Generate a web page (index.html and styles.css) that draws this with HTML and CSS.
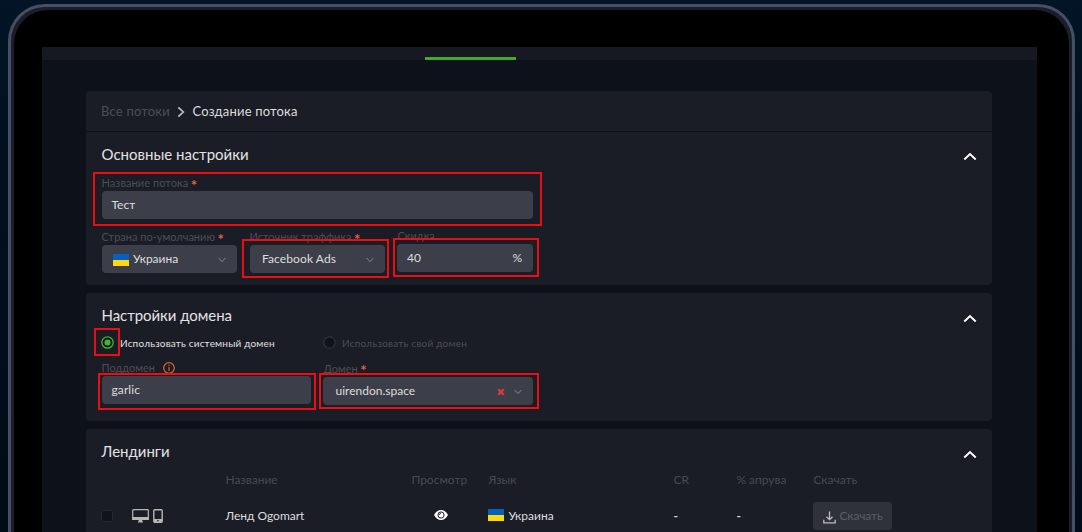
FILE: index.html
```html
<!DOCTYPE html>
<html lang="ru">
<head>
<meta charset="utf-8">
<title>Создание потока</title>
<link rel="stylesheet" href="styles.css">
</head>
<body>
<svg width="0" height="0" class="defs">
  <symbol id="up" viewBox="0 0 14 9"><path d="M1.300 7.500 7 2l5.700 5.500" fill="none" stroke="#fff" stroke-width="1.900"/></symbol>
  <symbol id="down" viewBox="0 0 8 6"><path d="M.6 1 4 4.600 7.400 1" fill="none" stroke="#858993" stroke-width="1"/></symbol>
  <symbol id="flag" viewBox="0 0 16 12"><path d="M0 0h16v6H0z" fill="#0561c0"/><path d="M0 6h16v6H0z" fill="#ffd90f"/></symbol>
</svg>
<div class="laptop">
  <div class="screen">
    <div class="topbar"><div class="tab"></div></div>
    <main class="content">
      <nav class="crumbs">
        <span class="crumb-link">Все потоки</span>
        <svg class="crumb-arrow" viewBox="0 0 8 12"><path d="M1.300 1.300 6.300 6l-5 4.700" fill="none" stroke="#bdbdbd" stroke-width="1.700"/></svg>
        <span class="crumb-here">Создание потока</span>
      </nav>
      <section class="card main-card">
        <header class="head"><h2>Основные настройки</h2><svg class="up"><use href="#up"/></svg></header>
        <div class="field wide"><label><span class="l-name">Название потока</span><b>*</b></label><div class="input"><span>Тест</span></div></div>
        <div class="row">
          <div class="field sel"><label><span>Страна по-умолчанию</span><b>*</b></label><div class="input select"><svg class="flag"><use href="#flag"/></svg><span>Украина</span><svg class="down"><use href="#down"/></svg></div></div>
          <div class="field sel"><label><span>Источник траффика</span><b>*</b></label><div class="input select"><span class="v-fb">Facebook Ads</span><svg class="down"><use href="#down"/></svg></div></div>
          <div class="field sale"><label><span>Скидка</span></label><div class="input between"><span>40</span><span>%</span></div></div>
        </div>
      </section>
      <section class="card domain-card">
        <header class="head"><h2 class="t-domain">Настройки домена</h2><svg class="up"><use href="#up"/></svg></header>
        <div class="radios">
          <div class="radio on"><svg viewBox="0 0 14 14"><circle cx="7" cy="7" r="6.100" fill="#10131c" stroke="#41b82c" stroke-width="1.400"/><circle cx="7" cy="7" r="3.300" fill="#41b82c"/></svg><span>Использовать системный домен</span></div>
          <div class="radio"><svg viewBox="0 0 14 14"><circle cx="7" cy="7" r="6.100" fill="#10131c" stroke="#363943" stroke-width="1.100"/></svg><span>Использовать свой домен</span></div>
        </div>
        <div class="row">
          <div class="field sub"><label><span>Поддомен</span><svg class="info" viewBox="0 0 12 12"><circle cx="6" cy="6" r="5.300" fill="none" stroke="#d9652f" stroke-width="1.200"/><path d="M6 5v4M6 2.800v1.200" stroke="#d9652f" stroke-width="1.200"/></svg></label><div class="input"><span class="v-garlic">garlic</span></div></div>
          <div class="field dom"><label><span>Домен</span><b>*</b></label><div class="input select"><span>uirendon.space</span><svg class="clear" viewBox="0 0 8 8"><path d="m1.200 1.200 5.600 5.600m0-5.600L1.200 6.800" stroke="#e0393c" stroke-width="2.200"/></svg><svg class="down"><use href="#down"/></svg></div></div>
        </div>
      </section>
      <section class="card land-card">
        <header class="head"><h2>Лендинги</h2><svg class="up"><use href="#up"/></svg></header>
        <div class="grid thead"><span></span><span></span><span>Название</span><span>Просмотр</span><span>Язык</span><span>CR</span><span>% апрува</span><span>Скачать</span></div>
        <div class="grid line">
          <span class="check"></span>
          <span class="devices">
            <svg width="17" height="14" viewBox="0 0 17 14"><path d="M1.500.7h14q.8 0 .8.8v8.800H.7V1.500q0-.8.8-.8z" fill="none" stroke="#b7b7b7" stroke-width="1.200"/><path d="M.5 8h16v3H.5zM6.800 11h3.400l.8 2.400H6z" fill="#b7b7b7"/></svg>
            <svg width="10" height="14" viewBox="0 0 10 14"><rect x=".8" y=".8" width="8.400" height="12.400" rx="1" fill="none" stroke="#b7b7b7" stroke-width="1.400"/><path d="M1 10h8v3H1z" fill="#b7b7b7"/><circle cx="5" cy="11.700" r=".8" fill="#1a1c26"/></svg>
          </span>
          <span>Ленд Ogomart</span>
          <span class="eye"><svg width="14" height="10" viewBox="0 0 14 10"><path d="M0 5Q2.800 0 7 0t7 5q-2.800 5-7 5T0 5z" fill="#fff"/><circle cx="7" cy="5" r="3.100" fill="none" stroke="#1a1c26" stroke-width="1"/><path d="M5.300 5Q5.500 3.300 7 3.200" fill="none" stroke="#1a1c26" stroke-width=".9"/></svg></span>
          <span class="lang"><svg class="flag"><use href="#flag"/></svg><span>Украина</span></span>
          <span class="dash">-</span><span class="dash">-</span>
          <span class="button"><svg width="13" height="13" viewBox="0 0 13 13"><path d="M6.500.5v8M3.500 5.700l3 3 3-3M.8 8.800v3.100h11.400V8.800" fill="none" stroke="#bcbcbe" stroke-width="1.300"/></svg><span class="c-load">Скачать</span></span>
        </div>
      </section>
    </main>
  </div>
</div>
<div class="mark m-name"></div><div class="mark m-source"></div><div class="mark m-sale"></div>
<div class="mark m-radio"></div><div class="mark m-sub"></div><div class="mark m-dom"></div>
</body>
</html>
```
FILE: styles.css
```css
* { box-sizing: border-box; }
html { overflow: hidden; }
body { margin: 0; width: 1082px; height: 532px; overflow: hidden; position: relative; padding: 4px 7px 0 8px; background: linear-gradient(#021426, #010f1e 35%, #020c18); font: 12px/16px Lato, "Open Sans", sans-serif; color: #dededf; white-space: nowrap; }
svg { display: block; flex: none; }
.defs { position: absolute; }
.laptop { height: 528px; overflow: hidden; border: 3px solid #465064; border-bottom: 0; border-radius: 37px 37px 0 0; background: #000; box-shadow: inset 3px 3px 0 #1a1e2a, inset -3px 3px 0 #1a1e2a; padding: 40px 35px 0 31px; }
.screen { height: 485px; overflow: hidden; background: #0d1119; }
.topbar { height: 13px; background: #161922; padding: 10px 0 0 383px; }
.tab { width: 91px; height: 3px; background: #43a92f; }
.content { padding: 31px 45px 0 44px; }
.crumbs { height: 40px; display: flex; align-items: center; padding-left: 15px; background: #1a1c26; border-radius: 4px 4px 0 0; font-size: 13px; }
.crumb-link { color: #4c4e56; width: 69px; letter-spacing: .2px; }
.crumb-arrow { width: 8px; height: 12px; margin: 1px 7px 0 7px; }
.crumb-here { letter-spacing: .18px; padding-left: .5px; }
.card { background: #1a1c26; border-radius: 4px; padding: 0 15px; margin-bottom: 8px; }
.main-card { margin-top: 1px; height: 153px; border-radius: 0 0 4px 4px; }
.domain-card { height: 128px; }
.land-card { height: 103px; margin: 0; border-radius: 4px 4px 0 0; }
.head { height: 44px; display: flex; justify-content: space-between; align-items: center; }
.main-card .head { height: 43px; }
.land-card .head { height: 42px; padding-top: 2px; }
h2 { margin: 0; padding-left: .5px; font-size: 15px; font-weight: 400; line-height: 20px; color: #e3e3e4; }
.t-domain { letter-spacing: -.05px; }
.up { width: 14px; height: 9px; margin: 6px 0 0; }
label { display: flex; align-items: center; gap: 4px; height: 16px; color: #4c4e57; font-size: 11px; padding-left: .5px; }
.l-name { letter-spacing: .08px; }
label b { color: #df604b; font-size: 15px; font-weight: 700; line-height: 12px; padding-top: 3px; margin-left: -1.500px; }
.wide { width: 432px; }
.row { display: flex; gap: 12px; }
.input { height: 28px; display: flex; align-items: center; padding: 0 10px; margin-left: .5px; background: #3c3f4a; border-radius: 4px; }
.main-card .row { margin-top: 10px; }
.sel { width: 136px; }
.select { padding: 0 11px 0 12.500px; }
.flag { width: 16px; height: 12px; margin-right: 4px; position: relative; top: 1px; }
.select .flag { margin-left: -1px; }
.down { width: 8px; height: 6px; margin: 2px 0 0 auto; }
.v-fb { letter-spacing: .1px; }
.sale { width: 136px; margin-top: -1px; }
.sale .input { margin-left: 0; padding-right: 11px; }
.between { justify-content: space-between; }
.radios { display: flex; height: 23px; }
.radio { display: flex; align-items: center; width: 222px; height: 11px; font-size: 10px; letter-spacing: .23px; color: #4c4e57; gap: 6px; }
.radio svg { width: 13px; height: 13px; }
.on { gap: 6px; color: #e0e0e1; letter-spacing: .18px; }
.sub { width: 210px; }
.sub .input { padding-bottom: 1px; }
.v-garlic { letter-spacing: .1px; }
.dom { width: 210px; padding-top: 1px; }
.dom label { height: 15px; }
.dom .input { margin: 1px 0 0; }
.info { width: 12px; height: 12px; margin-left: 4.500px; }
.clear { width: 8px; height: 8px; margin: 1px 0 0 auto; }
.dom .down { margin-left: 9px; }
.grid { display: grid; grid-template-columns: 31px 93px 186px 77px 185px 63px 77px 1fr; align-items: center; padding-left: .4px; }
.thead { height: 17px; color: #484a53; }
.line { height: 56px; }
.check { width: 12px; height: 12px; background: #10131b; border: 1px solid #262832; border-radius: 2px; }
.devices { display: flex; gap: 4px; }
.eye { padding-left: 23px; padding-bottom: 2px; }
.lang { display: flex; }
.dash { font-weight: 700; }
.button { display: flex; align-items: center; gap: 3px; width: 79px; height: 28px; padding-left: 10px; border-radius: 3px; background: #2f313b; color: #5c5e66; }
.button svg { position: relative; top: 1px; }
.c-load { letter-spacing: -.1px; }
.mark { position: absolute; border: 2px solid #ee0d10; }
.m-name { left: 93px; top: 172px; width: 449px; height: 54px; }
.m-source { left: 242px; top: 239px; width: 147px; height: 39px; }
.m-sale { left: 393px; top: 238px; width: 146px; height: 39px; }
.m-radio { left: 94px; top: 328px; width: 26px; height: 28px; }
.m-sub { left: 98px; top: 373px; width: 218px; height: 37px; }
.m-dom { left: 319px; top: 373px; width: 220px; height: 36px; }
```
